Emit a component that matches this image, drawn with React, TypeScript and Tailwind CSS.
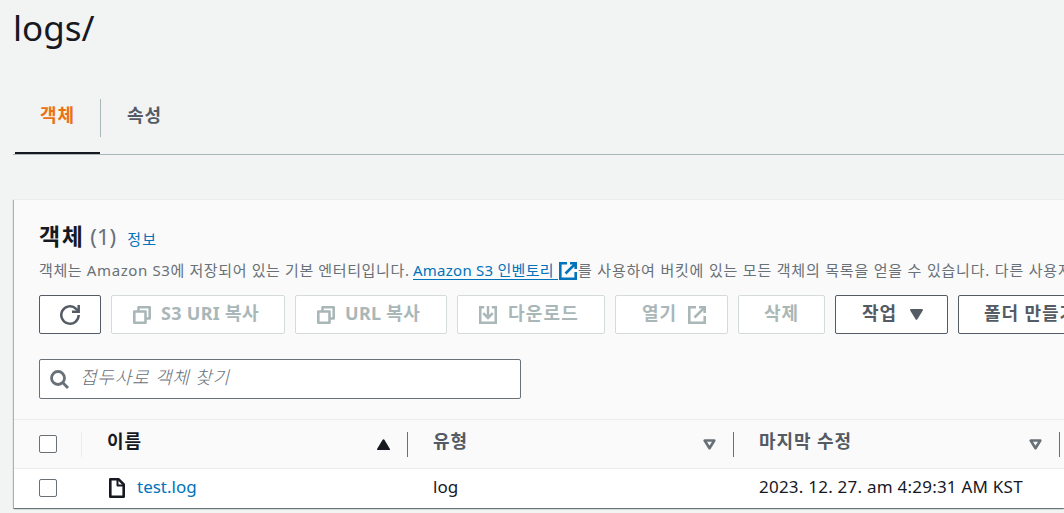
import React from 'react';

type IconProps = { className?: string };

const RefreshIcon: React.FC<IconProps> = ({ className }) => (
  <svg viewBox="0 0 20 20" width="20" height="20" fill="none" stroke="currentColor" strokeWidth="2.5" className={className}>
    <path d="M18.700 10a8.700 8.700 0 1 1-2.600-6.200L18.500 6" />
    <path d="M18.700 0v6.700H12" />
  </svg>
);

const CopyIcon: React.FC<IconProps> = ({ className }) => (
  <svg viewBox="0 0 18 18" width="18" height="18" fill="none" stroke="currentColor" strokeWidth="2.600" strokeLinejoin="round" className={className}>
    <path d="M1.300 5.500h11.200v11.200H1.300z" />
    <path d="M5.500 5V1.300h11.200v11.200H13" />
  </svg>
);

const DownloadIcon: React.FC<IconProps> = ({ className }) => (
  <svg viewBox="0 0 18 18" width="18" height="18" fill="none" stroke="currentColor" strokeWidth="2.500" className={className}>
    <path d="M5.200 1.250H1.250v15.500h15.500V1.250h-3.950" />
    <path d="M9 0v11.500M4.200 7.200L9 12l4.800-4.800" />
  </svg>
);

const ExternalIcon: React.FC<IconProps> = ({ className }) => (
  <svg viewBox="0 0 18 18" width="18" height="18" fill="none" stroke="currentColor" strokeWidth="2.600" className={className}>
    <path d="M8 1.300H1.300v15.400h15.400V10" />
    <path d="M11 1.300h5.700V7M16.700 1.300L6.500 11.500" />
  </svg>
);

const SearchIcon: React.FC<IconProps> = ({ className }) => (
  <svg viewBox="0 0 19 19" width="19" height="19" fill="none" stroke="currentColor" strokeWidth="2.800" className={className}>
    <circle cx="8" cy="8" r="6.500" />
    <path d="M12.600 12.600L18 18" />
  </svg>
);

const FileIcon: React.FC<IconProps> = ({ className }) => (
  <svg viewBox="0 0 16 20" width="16" height="20" fill="none" stroke="currentColor" strokeWidth="2.600" strokeLinejoin="round" className={className}>
    <path d="M1.300 1.300h8.400l5 5v12.400H1.300z" />
    <path d="M8.500 1.500v6h6" strokeWidth="2" />
  </svg>
);

const CaretDown: React.FC<IconProps> = ({ className }) => (
  <svg viewBox="0 0 13 11" width="13" height="11" fill="currentColor" className={className}>
    <path d="M1 0h11a.9.900 0 0 1 .8 1.400l-5.400 8.900a1 1 0 0 1-1.800 0L.2 1.400A.9.900 0 0 1 1 0z" />
  </svg>
);

const SortIcon: React.FC<{ active?: boolean }> = ({ active }) =>
  active ? (
    <svg viewBox="0 0 13 11" width="13" height="11" fill="#16191f">
      <path d="M1 11h11a.8.800 0 0 0 .8-1.300L7.400.700a1 1 0 0 0-1.800 0L.2 9.700A.8.800 0 0 0 1 11z" />
    </svg>
  ) : (
    <svg viewBox="0 0 13 11" width="13" height="11" fill="none" stroke="#687078" strokeWidth="2.600" strokeLinejoin="round">
      <path d="M1.700 1.500h9.600L6.500 9.200z" />
    </svg>
  );

const Checkbox: React.FC<{ label: string }> = ({ label }) => (
  <span role="checkbox" aria-checked="false" aria-label={label} className="block w-[18px] h-[18px] rounded-[2px] border border-[#687078] bg-white" />
);

interface ButtonProps {
  width: string;
  disabled?: boolean;
  label?: string;
  children: React.ReactNode;
}

const Button: React.FC<ButtonProps> = ({ width, disabled, label, children }) => (
  <button
    disabled={disabled}
    aria-label={label}
    className={`${width} h-[39px] shrink-0 flex items-center rounded-[2px] border bg-white text-[18px] font-bold leading-[22px] whitespace-nowrap ${
      disabled ? 'border-[#d5dbdb] text-[#aab7b8]' : 'border-[#545b64] text-[#545b64]'
    }`}
  >
    {children}
  </button>
);

interface ColumnProps {
  title: string;
  sorted?: boolean;
}

const Column: React.FC<ColumnProps> = ({ title, sorted }) => (
  <div className="w-[326px] shrink-0 h-[25px] flex items-center justify-between pl-[25px] pr-[17px] border-r border-[#687078]">
    <span className={`pb-[6px] text-[18px] font-bold tracking-[0.9px] ${sorted ? 'text-[#16191f]' : 'text-[#545b64]'}`}>{title}</span>
    <SortIcon active={sorted} />
  </div>
);

const App: React.FC = () => {
  return (
    <div className="h-[513px] w-full overflow-hidden bg-[#f2f3f3] text-[#16191f] font-['Noto_Sans','Noto_Sans_CJK_KR',sans-serif]">
      <h1 className="h-[99px] pl-[13px] pt-[4px] text-[35px] leading-[48px] font-normal">logs/</h1>

      {/* Tabs */}
      <div className="ml-[13px] h-[56px] border-b border-[#aab7b8] flex text-[18px] font-bold leading-[32px] tracking-[0.9px]">
        <div className="ml-[2px] w-[85px] h-[55px] border-b-2 border-[#16191f] text-center text-[#ec7211]">객체</div>
        <div className="h-[38px] border-l border-[#aab7b8] pl-[26px] text-[#545b64]">속성</div>
      </div>

      {/* Objects panel */}
      <div className="mt-[44px] ml-[14px] h-[309px] bg-[#fafafa] border-t border-[#eaeded] shadow-[0_1px_1px_0_rgba(0,28,36,0.45),-1px_1px_1px_0_rgba(0,28,36,0.25)] whitespace-nowrap">
        <div className="pl-[25px]">
          <div className="h-[57px] pt-[19px] flex items-baseline leading-[34px]">
            <h2 className="text-[23px] font-bold tracking-[1.5px]">객체</h2>
            <span className="ml-[6px] text-[22px] text-[#687078]">(1)</span>
            <a className="ml-[11px] text-[15px] tracking-[1.2px] text-[#0073bb]">정보</a>
          </div>

          <p className="h-[38px] flex items-start text-[15px] leading-[26px] text-[#687078]">
            <span className="w-[374px] shrink-0 tracking-[0.620px]">객체는 Amazon S3에 저장되어 있는 기본 엔터티입니다.</span>
            <a className="flex shrink-0 h-[24px] text-[#0073bb]">
              <span className="w-[145px] h-[23px] border-b border-[#0073bb] tracking-[0.250px]">Amazon S3 인벤토리</span>
              <ExternalIcon className="mt-[5px] ml-[1px]" />
            </a>
            <span className="ml-px tracking-[0.800px]">를 사용하여 버킷에 있는 모든 객체의 목록을 얻을 수 있습니다. 다른 사용자가</span>
          </p>

          <div className="flex gap-[10px]">
            <Button width="w-[62px]" label="새로 고침">
              <RefreshIcon className="ml-[20px]" />
            </Button>
            <Button width="w-[174px]" disabled>
              <CopyIcon className="ml-[21px] mr-[10px]" />
              <span className="pb-[3px] tracking-[0.300px]">S3 URI 복사</span>
            </Button>
            <Button width="w-[152px]" disabled>
              <CopyIcon className="ml-[21px] mr-[10px]" />
              <span className="pb-[3px] tracking-[0.300px]">URL 복사</span>
            </Button>
            <Button width="w-[148px]" disabled>
              <DownloadIcon className="ml-[21px] mr-[11px]" />
              <span className="pb-[3px] tracking-[1.200px]">다운로드</span>
            </Button>
            <Button width="w-[113px]" disabled>
              <span className="pl-[26px] pb-[3px] tracking-[0.900px]">열기</span>
              <ExternalIcon className="ml-[11px]" />
            </Button>
            <Button width="w-[87px]" disabled>
              <span className="pl-[25px] pb-[3px] tracking-[0.900px]">삭제</span>
            </Button>
            <Button width="w-[113px]">
              <span className="pl-[26px] pb-[3px] tracking-[0.900px]">작업</span>
              <CaretDown className="ml-[13px]" />
            </Button>
            <Button width="w-[150px]">
              <span className="pl-[25px] pb-[3px] tracking-[0.900px]">폴더 만들기</span>
            </Button>
          </div>

          <div className="mt-[25px] w-[482px] h-[40px] flex items-center border border-[#687078] rounded-[2px] bg-white pl-[10px]">
            <SearchIcon className="text-[#687078]" />
            <span className="ml-[11px] pb-[4px] text-[18px] italic font-light tracking-[0.800px] text-[#687078]">접두사로 객체 찾기</span>
          </div>
        </div>

        {/* Table */}
        <div className="mt-[20px] h-[50px] flex items-center border-y border-[#eaeded]">
          <div className="w-[68px] h-[25px] shrink-0 flex items-center pl-[25px] border-r border-[#eaeded]">
            <Checkbox label="모두 선택" />
          </div>
          <Column title="이름" sorted />
          <Column title="유형" />
          <Column title="마지막 수정" />
        </div>
        <div className="h-[39px] flex items-center bg-white pb-px text-[17px]">
          <div className="w-[68px] shrink-0 pl-[25px]">
            <Checkbox label="test.log" />
          </div>
          <div className="w-[326px] shrink-0 pl-[27px] flex items-center">
            <FileIcon />
            <a className="ml-[12px] pb-[2px] text-[#0073bb]">test.log</a>
          </div>
          <div className="w-[326px] shrink-0 pl-[25px] pb-[2px]">log</div>
          <div className="pl-[25px] pb-[2px] tracking-[0.230px]">2023. 12. 27. am 4:29:31 AM KST</div>
        </div>
      </div>
    </div>
  );
};

export default App;
